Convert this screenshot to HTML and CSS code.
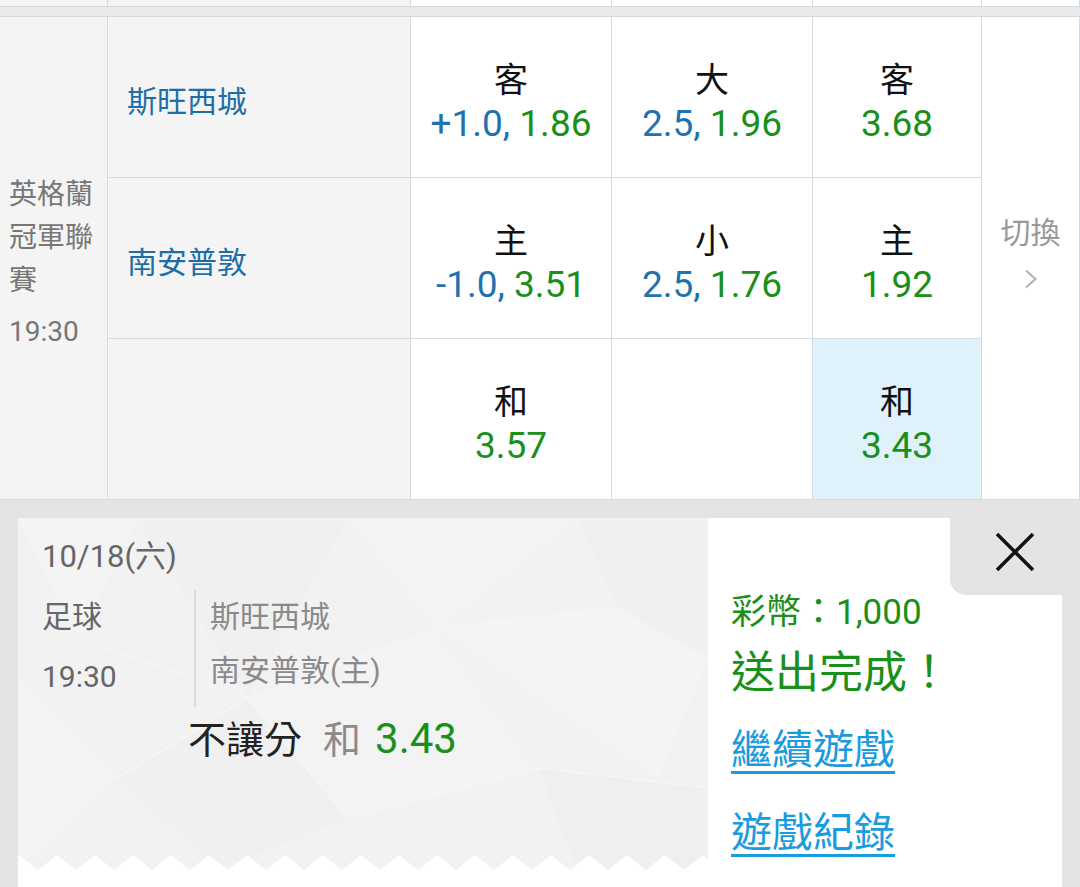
FILE: index.html
```html
<!DOCTYPE html>
<html lang="zh-Hant">
<head>
<meta charset="utf-8">
<title>Bet</title>
<link rel="stylesheet" href="styles.css">
</head>
<body>
<div class="prev-row">
  <div class="pc gray"></div>
  <div class="pc gray"></div>
  <div class="pc"></div>
  <div class="pc"></div>
  <div class="pc"></div>
  <div class="pc"></div>
</div>
<div class="band"></div>
<div class="match">
  <div class="league">
    <div class="league-name">英格蘭冠軍聯賽</div>
    <div class="league-time">19:30</div>
  </div>
  <div class="switch">
    <div class="switch-text">切換</div>
    <svg class="chev" width="14" height="20" viewBox="0 0 14 20"><path d="M2 1.5 L11.5 10 L2 18.5" fill="none" stroke="#b0b0b0" stroke-width="2"/></svg>
  </div>

  <div class="team">斯旺西城</div>
  <div class="odd"><div class="lbl">客</div><div class="val"><span class="b">+1.0,</span> <span class="g">1.86</span></div></div>
  <div class="odd"><div class="lbl">大</div><div class="val"><span class="b">2.5,</span> <span class="g">1.96</span></div></div>
  <div class="odd"><div class="lbl">客</div><div class="val"><span class="g">3.68</span></div></div>

  <div class="team">南安普敦</div>
  <div class="odd"><div class="lbl">主</div><div class="val"><span class="b">-1.0,</span> <span class="g">3.51</span></div></div>
  <div class="odd"><div class="lbl">小</div><div class="val"><span class="b">2.5,</span> <span class="g">1.76</span></div></div>
  <div class="odd"><div class="lbl">主</div><div class="val"><span class="g">1.92</span></div></div>

  <div class="team"></div>
  <div class="odd"><div class="lbl">和</div><div class="val"><span class="g">3.57</span></div></div>
  <div class="odd"></div>
  <div class="odd sel"><div class="lbl">和</div><div class="val"><span class="g">3.43</span></div></div>
</div>

<div class="tray">
  <div class="ticket">
    <div class="t-left">
      <svg class="t-bg" width="690" height="352" viewBox="0 0 690 352">
        <polygon points="0,0 120,0 60,120" fill="#f4f4f4"/>
        <polygon points="120,0 330,0 230,180" fill="#f0f0f0"/>
        <polygon points="330,0 560,0 420,110" fill="#f4f4f4"/>
        <polygon points="560,0 690,0 690,140 600,90" fill="#f0f0f0"/>
        <polygon points="420,110 600,90 690,140 640,260" fill="#f4f4f4"/>
        <polygon points="230,180 420,110 520,250 330,300" fill="#f3f3f3"/>
        <polygon points="0,160 100,260 0,352" fill="#f4f4f4"/>
        <polygon points="100,260 230,180 330,300 200,352" fill="#f0f0f0"/>
        <polygon points="520,250 690,270 690,352 560,352" fill="#efefef"/>
        <polyline points="60,120 230,180 420,110 600,90" fill="none" stroke="#f6f6f6" stroke-width="1.5"/>
        <polyline points="100,260 230,180 330,300 520,250 690,270" fill="none" stroke="#f6f6f6" stroke-width="1.5"/>
      </svg>
      <div class="t-date">10/18(六)</div>
      <div class="t-info">
        <div class="t-meta">
          <div>足球</div>
          <div>19:30</div>
        </div>
        <div class="t-teams">
          <div>斯旺西城</div>
          <div>南安普敦(主)</div>
        </div>
      </div>
      <div class="t-bet"><span class="k">不讓分</span><span class="o">和</span><span class="g">3.43</span></div>
      <svg class="zigzag" width="690" height="16" viewBox="0 0 690 16">
        <defs>
          <pattern id="zz" x="-18" y="0" width="38" height="16" patternUnits="userSpaceOnUse">
            <polygon points="0,16 19,1 38,16" fill="#ffffff"/>
          </pattern>
        </defs>
        <rect width="690" height="16" fill="url(#zz)"/>
      </svg>
    </div>
    <div class="t-right">
      <div class="coins">彩幣：1,000</div>
      <div class="done">送出完成！</div>
      <a class="link link-first" href="#">繼續遊戲</a>
      <a class="link link-second" href="#">遊戲紀錄</a>
    </div>
    <button class="close" type="button" aria-label="close">
      <svg width="40" height="40" viewBox="0 0 40 40"><path d="M2 2 L38 38 M38 2 L2 38" stroke="#111" stroke-width="3.5" fill="none"/></svg>
    </button>
  </div>
</div>
</body>
</html>
```
FILE: styles.css
```css
* {
  box-sizing: border-box;
  margin: 0;
  padding: 0;
}

html, body {
  width: 1080px;
  height: 887px;
  overflow: hidden;
}

body {
  font-family: Roboto, "Noto Sans CJK TC", sans-serif;
  background: #e4e4e4;
}

.prev-row {
  display: grid;
  grid-template-columns: 108px 303px 201px 201px 169px 98px;
  height: 7px;
  background: #fff;
  border-bottom: 1px solid #d3d8dd;
}

.pc {
  border-right: 1px solid #d6dbe0;
}

.pc.gray {
  background: #f4f4f4;
}

.band {
  height: 10px;
  background: #e8e9ea;
  border-bottom: 1px solid #d3d8dd;
}

.match {
  display: grid;
  grid-template-columns: 108px 303px 201px 201px 169px 98px;
  grid-template-rows: 161px 161px 161px;
  background: #fff;
}

.match > div {
  border-right: 1px solid #d6dbe0;
  border-bottom: 1px solid #d6dbe0;
}

.league {
  grid-column: 1;
  grid-row: 1 / span 3;
  background: #f4f4f4;
  display: flex;
  flex-direction: column;
  justify-content: center;
  padding: 10px 0 0 9px;
  color: #777;
  font-size: 28px;
  line-height: 43px;
}

.league-time {
  margin-top: 8px;
}

.switch {
  grid-column: 6;
  grid-row: 1 / span 3;
  display: flex;
  flex-direction: column;
  align-items: center;
  justify-content: center;
  padding-bottom: 15px;
  color: #999;
  font-size: 30px;
  line-height: 40px;
}

.chev {
  margin-top: 16px;
  display: block;
}

.team {
  background: #f4f4f4;
  display: flex;
  align-items: center;
  padding: 4px 0 0 19px;
  color: #1c6ea4;
  font-size: 30px;
}

.odd {
  display: flex;
  flex-direction: column;
  align-items: center;
  justify-content: center;
  padding-top: 10px;
}

.odd.sel {
  background: #dff1fb;
}

.lbl {
  font-size: 34px;
  line-height: 44px;
  color: #111;
}

.val {
  font-size: 37px;
  line-height: 44px;
}

.b {
  color: #1f72ab;
}

.g {
  color: #1a8f1a;
}

.tray {
  height: 387px;
  padding: 18px 18px 0;
  background: #e4e4e4;
}

.ticket {
  position: relative;
  display: flex;
  height: 369px;
  background: #fff;
}

.t-left {
  position: relative;
  width: 690px;
  height: 352px;
  padding-left: 24px;
  background: #f2f2f2;
  overflow: hidden;
}

.t-bg {
  position: absolute;
  left: 0;
  top: 0;
}

.zigzag {
  position: absolute;
  left: 0;
  bottom: 0;
}

.t-date,
.t-info,
.t-bet {
  position: relative;
}

.t-date {
  margin-top: 19px;
  font-size: 31px;
  line-height: 40px;
  color: #666;
}

.t-info {
  display: flex;
  margin-top: 10px;
}

.t-meta {
  width: 152px;
  font-size: 30px;
  line-height: 60px;
  color: #666;
}

.t-teams {
  margin-top: 3px;
  border-left: 2px solid #dcdcdc;
  padding-left: 14px;
  font-size: 30px;
  line-height: 54px;
  color: #8a8a8a;
}

.t-bet {
  margin: 7px 0 0 146px;
  font-size: 38px;
  line-height: 50px;
}

.t-bet .k {
  color: #222;
}

.t-bet .o {
  margin-left: 21px;
  color: #8a8a8a;
}

.t-bet .g {
  margin-left: 14px;
  font-size: 42px;
}

.t-right {
  flex: 1;
  display: flex;
  flex-direction: column;
  align-items: flex-start;
  padding: 73px 0 0 23px;
}

.coins {
  font-size: 35px;
  line-height: 44px;
  color: #1a8f1a;
}

.done {
  margin-top: 8px;
  font-size: 44px;
  line-height: 60px;
  color: #1a8f1a;
}

.link {
  font-size: 41px;
  line-height: 56px;
  color: #1a9be0;
  text-decoration: underline;
  text-decoration-thickness: 3px;
  text-underline-offset: 7px;
}

.link-first {
  margin-top: 19px;
}

.link-second {
  margin-top: 27px;
}

.close {
  position: absolute;
  top: 0;
  right: 0;
  width: 112px;
  height: 77px;
  border: none;
  background: #e4e4e4;
  border-bottom-left-radius: 16px;
  display: flex;
  align-items: flex-start;
  justify-content: flex-start;
  padding: 14px 0 0 45px;
  cursor: pointer;
}

.close svg {
  display: block;
}
```
